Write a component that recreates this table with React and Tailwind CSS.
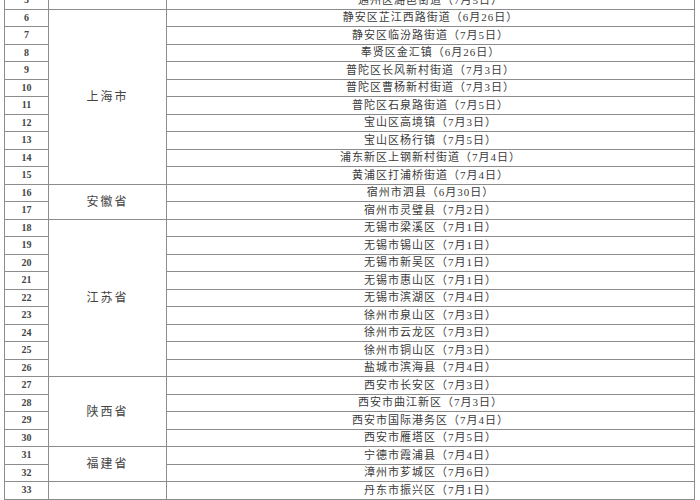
import React from "react"

// 表格数据：序号 / 省份（合并行）/ 区域
const groups = [
  { prov: "", rows: [[5, "通州区潞邑街道（7月5日）"]] },
  {
    prov: "上海市",
    rows: [
      [6, "静安区芷江西路街道（6月26日）"],
      [7, "静安区临汾路街道（7月5日）"],
      [8, "奉贤区金汇镇（6月26日）"],
      [9, "普陀区长风新村街道（7月3日）"],
      [10, "普陀区曹杨新村街道（7月3日）"],
      [11, "普陀区石泉路街道（7月5日）"],
      [12, "宝山区高境镇（7月3日）"],
      [13, "宝山区杨行镇（7月5日）"],
      [14, "浦东新区上钢新村街道（7月4日）"],
      [15, "黄浦区打浦桥街道（7月4日）"],
    ],
  },
  {
    prov: "安徽省",
    rows: [
      [16, "宿州市泗县（6月30日）"],
      [17, "宿州市灵璧县（7月2日）"],
    ],
  },
  {
    prov: "江苏省",
    rows: [
      [18, "无锡市梁溪区（7月1日）"],
      [19, "无锡市锡山区（7月1日）"],
      [20, "无锡市新吴区（7月1日）"],
      [21, "无锡市惠山区（7月1日）"],
      [22, "无锡市滨湖区（7月4日）"],
      [23, "徐州市泉山区（7月3日）"],
      [24, "徐州市云龙区（7月3日）"],
      [25, "徐州市铜山区（7月3日）"],
      [26, "盐城市滨海县（7月4日）"],
    ],
  },
  {
    prov: "陕西省",
    rows: [
      [27, "西安市长安区（7月3日）"],
      [28, "西安市曲江新区（7月3日）"],
      [29, "西安市国际港务区（7月4日）"],
      [30, "西安市雁塔区（7月5日）"],
    ],
  },
  {
    prov: "福建省",
    rows: [
      [31, "宁德市霞浦县（7月4日）"],
      [32, "漳州市芗城区（7月6日）"],
    ],
  },
  { prov: "", rows: [[33, "丹东市振兴区（7月1日）"]] },
]

const cell = "border border-[#8c8c8c] p-0 align-middle text-center"

export default function App() {
  return (
    <div className="w-[700px] h-[500px] overflow-hidden bg-white">
      <table
        className="ml-[4px] -mt-[9px] w-[691px] border-collapse table-fixed border border-[#7a7a7a] text-[#3a3a3a]"
        style={{ fontFamily: '"Liberation Serif", "Noto Sans CJK SC", serif' }}
      >
        <colgroup>
          <col className="w-[44px]" />
          <col className="w-[118px]" />
          <col />
        </colgroup>
        <tbody>
          {groups.map((g) =>
            g.rows.map(([n, area], i) => (
              <tr key={n} className="h-[17.5px]">
                <td className={`${cell} text-[10px] font-bold leading-none text-[#444]`}>{n}</td>
                {i === 0 && (
                  <td rowSpan={g.rows.length} className={`${cell} text-[12px] tracking-[2px] text-[#444]`}>
                    {g.prov}
                  </td>
                )}
                <td className={`${cell} text-[11px] leading-none tracking-[1px]`}>{area}</td>
              </tr>
            ))
          )}
        </tbody>
      </table>
    </div>
  )
}
